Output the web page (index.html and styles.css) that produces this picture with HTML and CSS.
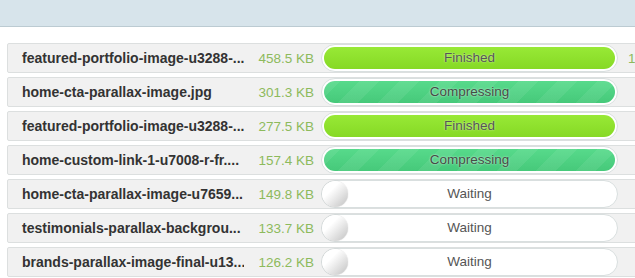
FILE: index.html
```html
<!DOCTYPE html>
<html>
<head>
<meta charset="utf-8">
<link rel="stylesheet" href="styles.css">
</head>
<body>
<header class="topbar"></header>
<main class="list">
  <div class="row">
    <div class="name">featured-portfolio-image-u3288-...</div>
    <div class="size">458.5 KB</div>
    <div class="bar"><div class="fill done">Finished</div></div>
    <div class="saved">1</div>
  </div>
  <div class="row">
    <div class="name">home-cta-parallax-image.jpg</div>
    <div class="size">301.3 KB</div>
    <div class="bar"><div class="fill busy">Compressing</div></div>
    <div class="saved"></div>
  </div>
  <div class="row">
    <div class="name">featured-portfolio-image-u3288-...</div>
    <div class="size">277.5 KB</div>
    <div class="bar"><div class="fill done">Finished</div></div>
    <div class="saved"></div>
  </div>
  <div class="row">
    <div class="name">home-custom-link-1-u7008-r-fr....</div>
    <div class="size">157.4 KB</div>
    <div class="bar"><div class="fill busy">Compressing</div></div>
    <div class="saved"></div>
  </div>
  <div class="row">
    <div class="name">home-cta-parallax-image-u7659...</div>
    <div class="size">149.8 KB</div>
    <div class="bar"><span class="knob"></span><div class="fill wait">Waiting</div></div>
    <div class="saved"></div>
  </div>
  <div class="row">
    <div class="name">testimonials-parallax-backgrou...</div>
    <div class="size">133.7 KB</div>
    <div class="bar"><span class="knob"></span><div class="fill wait">Waiting</div></div>
    <div class="saved"></div>
  </div>
  <div class="row">
    <div class="name">brands-parallax-image-final-u13...</div>
    <div class="size">126.2 KB</div>
    <div class="bar"><span class="knob"></span><div class="fill wait">Waiting</div></div>
    <div class="saved"></div>
  </div>
</main>
</body>
</html>
```

FILE: styles.css
```css
html, body {
  margin: 0;
  padding: 0;
  background: #ffffff;
  overflow: hidden;
  font-family: "Liberation Sans", Arial, sans-serif;
}

.topbar {
  height: 26px;
  background: #d7e4eb;
  border-bottom: 1px solid #bccbd2;
}

.list {
  padding: 16px 0 0 7px;
  display: flex;
  flex-direction: column;
  gap: 4px;
}

.row {
  display: flex;
  align-items: center;
  width: 700px;
  height: 28px;
  background: #f1f1f1;
  border: 1px solid #dcdfdf;
  border-radius: 2px;
  font-size: 13px;
}

.name {
  width: 222px;
  padding-left: 14px;
  font-weight: bold;
  font-size: 14px;
  color: #333333;
  white-space: nowrap;
  overflow: hidden;
}

.size {
  width: 70px;
  text-align: right;
  color: #8dba5c;
  font-size: 13.5px;
}

.bar {
  position: relative;
  box-sizing: border-box;
  margin-left: 7px;
  width: 297px;
  height: 28px;
  padding: 2px;
  background: #ffffff;
  border: 1px solid #d9dfdf;
  border-radius: 14px;
}

.fill {
  height: 22px;
  line-height: 22px;
  border-radius: 11px;
  text-align: center;
  color: #555555;
  font-size: 13.5px;
}

.done {
  background: linear-gradient(#98e936, #86d925);
  text-shadow: 0 0 2px rgba(255, 255, 255, 0.7);
}

.busy {
  background-color: #4fd585;
  background-image:
    repeating-linear-gradient(-45deg, rgba(255,255,255,0) 0 14px, rgba(255,255,255,0.07) 14px 28px),
    linear-gradient(#57da8b, #46c97a);
  color: #444c46;
  text-shadow: 0 0 2px rgba(255, 255, 255, 0.8);
}

.wait {
  background: transparent;
  color: #555555;
}

.knob {
  position: absolute;
  left: 0;
  top: 0;
  width: 26px;
  height: 26px;
  border-radius: 50%;
  background: linear-gradient(135deg, #ffffff 35%, #ececec 55%, #cfcfcf 85%);
  box-shadow: 0 0 1px rgba(0, 0, 0, 0.25);
}

.saved {
  margin-left: 10px;
  color: #8dba5c;
  font-size: 13.5px;
}
```
